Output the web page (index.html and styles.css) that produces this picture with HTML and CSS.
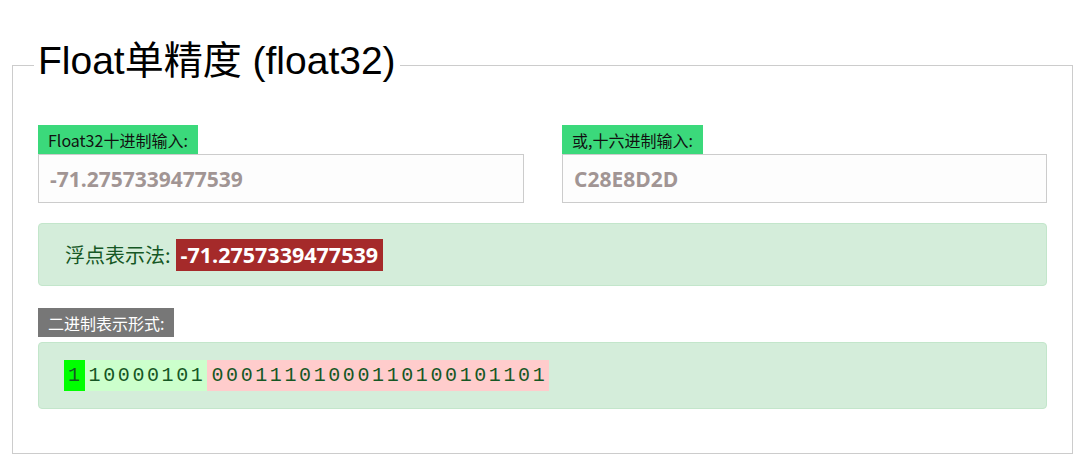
FILE: index.html
```html
<!DOCTYPE html>
<html lang="zh-CN">
<head>
<meta charset="utf-8">
<title>Float单精度 (float32)</title>
<link rel="stylesheet" href="styles.css">
</head>
<body>
<fieldset class="panel">
  <legend class="panel-title">Float单精度 (float32)</legend>
  <div class="panel-body">
    <div class="inputs">
      <div class="field">
        <span class="tag tag-green">Float32十进制输入:</span>
        <input class="text-input" type="text" value="-71.2757339477539">
      </div>
      <div class="field">
        <span class="tag tag-green">或,十六进制输入:</span>
        <input class="text-input" type="text" value="C28E8D2D">
      </div>
    </div>
    <div class="alert alert-float">
      <span class="alert-label">浮点表示法:</span>
      <span class="badge-red">-71.2757339477539</span>
    </div>
    <span class="tag tag-gray">二进制表示形式:</span>
    <div class="alert alert-binary">
      <span class="bits bits-sign">1</span><span class="bits bits-exp">10000101</span><span class="bits bits-man">00011101000110100101101</span>
    </div>
  </div>
</fieldset>
</body>
</html>
```

FILE: styles.css
```css
html, body {
  margin: 0;
  padding: 0;
  background: #ffffff;
}

body {
  padding: 40px 4px 0 12px;
  font-family: "Noto Sans CJK SC", "Noto Sans", sans-serif;
}

.panel {
  margin: 0;
  border: 1px solid #cccccc;
  padding: 0 21px 44px 21px;
  min-width: 0;
}

.panel-title {
  font-family: "Liberation Sans", "Noto Sans CJK SC", Arial, sans-serif;
  font-size: 39px;
  line-height: 42px;
  padding: 0 4px 8px 4px;
  color: #000000;
  font-weight: normal;
}

.panel-body {
  padding: 35px 4px 0 4px;
}

.inputs {
  display: grid;
  grid-template-columns: 486px 1fr;
  column-gap: 38px;
}

.field {
  display: flex;
  flex-direction: column;
  align-items: flex-start;
}

.tag {
  display: inline-block;
  height: 29px;
  line-height: 31px;
  padding: 0 10px;
  font-size: 16px;
  font-family: "Noto Sans CJK SC", sans-serif;
}

.tag-green {
  background: #3bd97b;
  color: #111111;
}

.tag-gray {
  background: #777777;
  color: #ffffff;
  margin-top: 22px;
}

.text-input {
  display: block;
  box-sizing: border-box;
  width: 100%;
  height: 49px;
  margin: 0;
  border: 1px solid #cccccc;
  background: #fdfdfd;
  padding: 0 11px;
  font-family: "Open Sans", "Noto Sans", sans-serif;
  font-weight: bold;
  font-size: 21px;
  color: #a19594;
  outline: none;
}

.alert {
  box-sizing: border-box;
  background: #d4edda;
  border: 1px solid #c3e6cb;
  border-radius: 4px;
  color: #155724;
  display: flex;
  align-items: center;
}

.alert-float {
  margin-top: 20px;
  height: 63px;
  padding: 0 26px;
}

.alert-label {
  font-size: 20px;
  line-height: 24px;
  margin-right: 5px;
}

.badge-red {
  background: #a52a2a;
  color: #ffffff;
  font-family: "Open Sans", "Noto Sans", sans-serif;
  font-weight: bold;
  font-size: 21.5px;
  height: 32px;
  line-height: 32px;
  padding: 0 5px;
}

.alert-binary {
  margin-top: 5px;
  height: 67px;
  padding: 0 25px;
}

.bits {
  display: inline-block;
  font-family: "Liberation Mono", "DejaVu Sans Mono", monospace;
  font-size: 20px;
  letter-spacing: 2.6px;
  height: 31px;
  line-height: 31px;
  padding: 0 2px 0 4px;
  color: #155724;
}

.bits-sign {
  background: #00ff00;
}

.bits-exp {
  background: #ccffcc;
}

.bits-man {
  background: #ffcccc;
}
```
